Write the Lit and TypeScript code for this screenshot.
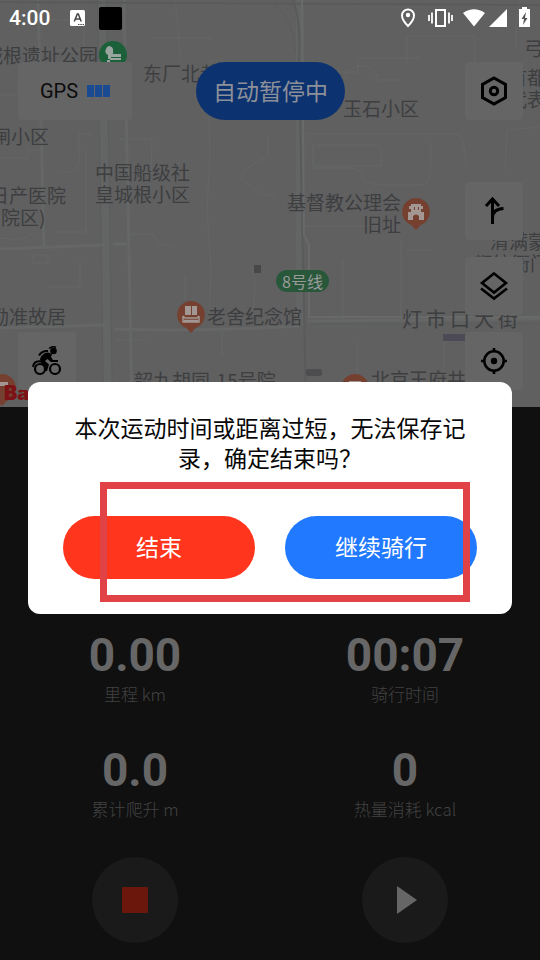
import { LitElement, html, css, svg } from "lit";
import { customElement } from "lit/decorators.js";

/** Base map: streets, place labels and points of interest. */
@customElement("ride-map")
class RideMap extends LitElement {
  static styles = css`
    :host {
      display: block;
      position: absolute;
      inset: 0;
      overflow: hidden;
      background: #606060;
      color: #3d3e40;
      font: 19px/22px "Noto Sans CJK SC", sans-serif;
    }
    .streets { position: absolute; left: 0; top: 0; width: 100%; height: 100%; }
    .place { position: absolute; margin: 0; white-space: nowrap; }
    .right { text-align: right; }
    .park { left: -16px; top: 44px; }
    .park-pin { left: 99px; top: 41px; }
    .north { left: 143px; top: 62px; }
    .jade { left: 343px; top: 97px; }
    .bow { left: 524px; top: 37px; }
    .capital { left: 508px; top: 66px; }
    .gate { left: -8px; top: 125px; }
    .hospital { left: -10px; top: 184px; }
    .hospital span { padding-left: 11px; }
    .society { left: 95px; top: 161px; }
    .church { left: 287px; top: 191px; }
    .church-pin { left: 402px; top: 198px; }
    .qing { left: 473px; top: 230px; }
    .qing span { padding-left: 17px; }
    .subway {
      left: 276px; top: 270px; padding: 0 6px; border-radius: 11px;
      background: #28573a; color: #999b9a; font-size: 16px;
    }
    .residence { left: -10px; top: 305px; }
    .laoshe { left: 207px; top: 305px; }
    .laoshe-pin { left: 177px; top: 301px; }
    .street { left: 402px; top: 308px; display: flex; gap: 4px; font-size: 20px; }
    .hutong { left: 134px; top: 369px; }
    .mall { left: 371px; top: 368px; }
    .mall-pin { left: 341px; top: 374px; }
    .edge-pin { left: -12px; top: 374px; }
    .brand {
      left: 4px; top: 382px; color: #7d1216;
      font: 900 20px/22px Inter, "Liberation Sans", sans-serif;
    }
    .pin { display: block; }
  `;

  private pin(glyph: unknown) {
    return html`<svg class="pin" width="28" height="33" viewBox="0 0 28 33">
      <path fill="#75402f" d="M14 0a14 14 0 0 1 4.5 27.200L14 32l-4.500-4.800A14 14 0 0 1 14 0z"/>
      ${glyph}
    </svg>`;
  }

  render() {
    return html`
      <svg class="streets" viewBox="0 0 540 407" preserveAspectRatio="xMidYMin slice" aria-hidden="true">
        <g fill="none" stroke="#656666">
          <path stroke="#5b5c5c" stroke-width="10" d="M102 0 108 407"/>
          <path stroke="#636464" stroke-width="8" d="M102 0 108 407M300 0V326"/>
          <path stroke-width="3" d="M38 0 44 247M124 0 132 407M0 249 105 245M113 244H127M0 328 105 325M114 329Q200 332 300 326M308 321 540 319"/>
          <path d="M46 20h38v30H46M0 95h18v-15h30M0 158h28v-8h10M57 172q25 5 22-20v-18h13M120 139h32l-1 35M128 234h24l8 10 15 3M208 90l2 60-3 60 4 60-2 50M218 61h-10M152 38h60M175 0l6 60M0 238q30 5 34-8M86 150v82H57M33 255h15v8H33zM268 156q-27 12-27 24l8 5 14 10h12M268 156v-20M80 262v25H48M252 268q8 25-4 55M222 322v35M185 275v25M145 340h-28"/>
          <path d="M304 72h54v-14h62M345 80q2-14 17-14 14 0 16 14h22M317 145h60q4 0 4 5v16H313v-22M313 168h38q10 0 13 12 5 5 20 5h38q8 0 9-20v-22M307 134h150q6 0 8 20l1 12M407 61v-25h68v32M520 0l-4 26v22M304 226h67M401 240v85M407 250h24M505 170l2-40 33-3M343 260v60M357 343v40M444 334v50"/>
          <path stroke="#595a5b" stroke-width="2" d="M0 2 540 5M293 0Q301 20 299 60L306 407"/>
          <path stroke="#686969" stroke-width="2" d="M302 0 304 235 309 245V317H540"/>
          <path stroke="#5b5c5c" d="M270 3q24 12 25 50M311 324H540"/>
        </g>
        <rect x="254" y="265" width="7" height="8" fill="#484849"/>
        <rect x="443" y="334" width="24" height="7" fill="#4b4a55"/>
        <rect x="306" y="369" width="16" height="7" rx="2" fill="#4d4d50"/>
      </svg>

      <p class="place park">城根遗址公园</p>
      <svg class="place park-pin" width="28" height="28" viewBox="0 0 28 28">
        <circle cx="14" cy="14" r="14" fill="#1b6038"/>
        <path fill="#9ba59f" d="M10 5a4 4 0 0 1 4 5 3 3 0 0 1-2 4v4H9v-4a4 4 0 0 1-2-6 4 4 0 0 1 3-3zM12 13h10v3H12zM11 17h11v2H11zM8 19h3v2H8z"/>
      </svg>
      <p class="place north">东厂北巷</p>
      <p class="place jade">玉石小区</p>
      <p class="place bow">弓</p>
      <p class="place capital">首都<br>代表</p>
      <p class="place gate">闸小区</p>
      <p class="place hospital">日产医院<br><span>院区)</span></p>
      <p class="place society">中国船级社<br>皇城根小区</p>
      <p class="place church right">基督教公理会<br>旧址</p>
      <div class="place church-pin">${this.pin(svg`<path fill="#a29792" d="M9 6h10v2h2v3h-2v3h3v8h-5v-4q-3-3-6 0v4H6v-8h3v-3H7V8h2zM12 9v3h1V9zM16 9v3h1V9z"/>`)}</div>
      <p class="place qing"><span>清满蒙汉</span><br>都统衙门</p>
      <p class="place subway">8号线</p>
      <p class="place residence">励准故居</p>
      <p class="place laoshe">老舍纪念馆</p>
      <div class="place laoshe-pin">${this.pin(svg`<path fill="#a29792" d="M8 5h6v9H8zM15 5h5v9h-5z"/><path fill="none" stroke="#a29792" stroke-width="1.500" d="M6 15l2 2h12l2-2M6 15v6h16v-6M7 19.500h14"/>`)}</div>
      <p class="place street"><span>灯</span><span>市</span><span>口</span><span>大</span><span>街</span></p>
      <p class="place hutong">韶九胡同-15号院</p>
      <p class="place mall">北京王府井</p>
      <div class="place mall-pin">${this.pin(svg`<path fill="#a29792" d="M8 7h12v10H8z"/>`)}</div>
      <div class="place edge-pin">${this.pin(svg`<path fill="#a29792" d="M7 8h13v4H7z"/>`)}</div>
      <p class="place brand">Baidu</p>
    `;
  }
}

@customElement("status-bar")
class StatusBar extends LitElement {
  static styles = css`
    :host {
      display: flex;
      align-items: center;
      height: 36px;
      padding: 0 8px 0 9px;
      color: #fff;
      font: 500 21px/24px Roboto, sans-serif;
    }
    .time { margin-right: 20px; }
    .notice { margin-right: 13px; }
    .app { width: 23px; height: 23px; border-radius: 2px; background: #000; }
    .system { margin-left: auto; }
    svg { display: block; }
  `;

  render() {
    return html`
      <span class="time">4:00</span>
      <svg class="notice" width="16" height="17" viewBox="0 0 16 17">
        <rect width="15" height="16" rx="1.500" fill="#fff"/>
        <path d="M4.300 11.500 7.300 4h1L11.200 11.500M5.500 9h4.500" fill="none" stroke="#444" stroke-width="1.500"/>
        <path d="M8 14.500h6" stroke="#444" stroke-dasharray="1.500 .8"/>
      </svg>
      <span class="app"></span>
      <svg class="system" width="132" height="24" viewBox="0 0 132 24">
        <path d="M8 3.500a6 6 0 0 1 6 6C14 14 8 20 8 20S2 14 2 9.500a6 6 0 0 1 6-6z" fill="none" stroke="#fff" stroke-width="2"/>
        <circle cx="8" cy="9" r="2.200" fill="#fff"/>
        <path d="M36 4h9v16h-9z" fill="none" stroke="#fff" stroke-width="2"/>
        <path d="M29 9v6M32 6.500v11M49 6.500v11M52 9v6" stroke="#fff" stroke-width="1.800"/>
        <path d="M63 7q11-7.500 22 0L74 20.500zM107 3v18H89zM122 1h5v2h3v18h-11V3h3z" fill="#fff"/>
        <path d="m126 6-4.500 7h2.500l-1 6 4.500-7H125z" fill="#555"/>
      </svg>
    `;
  }
}

@customElement("app-root")
class AppRoot extends LitElement {
  static styles = css`
    :host {
      display: flex;
      flex-direction: column;
      position: relative;
      min-height: 100vh;
      background: #101010;
      font-family: "Noto Sans CJK SC", sans-serif;
    }
    * { box-sizing: border-box; }
    button { border: 0; padding: 0; font: inherit; color: inherit; cursor: pointer; }
    svg { display: block; }

    .map { position: relative; padding-bottom: 17px; overflow: hidden; }
    .chrome { position: relative; }
    .tools {
      display: grid;
      grid-template-columns: 1fr auto 1fr;
      align-items: start;
      padding: 26px 17px 0 18px;
    }
    .card {
      display: flex;
      align-items: center;
      justify-content: center;
      width: 58px;
      height: 58px;
      border-radius: 4px;
      background: #656565;
      color: #000;
    }
    .gps {
      gap: 9px;
      width: 114px;
      color: #0c0c0c;
      font: 20px/24px Roboto, sans-serif;
    }
    .bars { display: flex; gap: 1px; }
    .bars i { width: 7px; height: 12px; background: #194a92; }
    .paused {
      height: 58px;
      padding: 0 17px;
      border-radius: 29px;
      background: #0d3270;
      color: #8c9099;
      font-size: 23px;
      line-height: 56px;
    }
    .settings { justify-self: end; }
    .side {
      display: flex;
      justify-content: space-between;
      align-items: flex-end;
      padding: 62px 17px 0 18px;
    }
    .stack { display: flex; flex-direction: column; gap: 17px; }

    .panel {
      flex: 1;
      display: flex;
      flex-direction: column;
      justify-content: flex-end;
      gap: 36px;
      padding-bottom: 17px;
    }
    .metrics { display: grid; grid-template-columns: 1fr 1fr; row-gap: 39px; margin: 0; }
    .metric { display: flex; flex-direction: column; gap: 2px; text-align: center; }
    .value { order: -1; margin: 0; color: #666; font: bold 46px/50px Roboto, sans-serif; }
    .name { color: #424242; font-size: 17px; font-weight: 300; line-height: 24px; }
    .actions { display: grid; grid-template-columns: 1fr 1fr; justify-items: center; }
    .round {
      display: grid;
      place-items: center;
      width: 86px;
      height: 86px;
      border-radius: 50%;
      background: #1a1a1a;
    }

    .overlay {
      position: absolute;
      inset: 0;
      display: flex;
      align-items: center;
      padding: 36px 28px 0;
    }
    .dialog {
      position: relative;
      flex: 1;
      padding: 30px 35px 35px;
      border-radius: 12px;
      background: #fff;
      font-size: 23px;
    }
    .message {
      margin: 0 0 44px;
      padding: 0 8px;
      color: #080808;
      line-height: 30px;
      text-align: center;
    }
    .choices { display: grid; grid-template-columns: 1fr 1fr; gap: 30px; }
    .choice { height: 63px; padding-bottom: 4px; border-radius: 32px; color: #fff; }
    .end { background: #ff351e; }
    .resume { background: #2179ff; }
    .highlight {
      position: absolute;
      inset: 100px 42px 12px 72px;
      border: 7px solid #e04245;
      pointer-events: none;
    }
  `;

  private metrics = [
    ["里程 km", "0.00"],
    ["骑行时间", "00:07"],
    ["累计爬升 m", "0.0"],
    ["热量消耗 kcal", "0"],
  ];

  render() {
    return html`
      <section class="map">
        <ride-map></ride-map>
        <div class="chrome">
          <status-bar></status-bar>
          <div class="tools">
            <div class="card gps">GPS<span class="bars"><i></i><i></i><i></i></span></div>
            <div class="paused">自动暂停中</div>
            <button class="card settings" aria-label="设置">
              <svg width="30" height="32" viewBox="0 0 30 32" fill="none" stroke="currentColor" stroke-width="3">
                <path d="M15 3 26.500 9.500v13L15 29 3.500 22.500v-13z"/><circle cx="15" cy="16" r="3.700"/>
              </svg>
            </button>
          </div>
          <div class="side">
            <button class="card" aria-label="骑行">
              <svg width="30" height="30" viewBox="0 0 30 30" fill="none" stroke="currentColor">
                <circle cx="8" cy="23" r="5" stroke-width="2.200"/>
                <circle cx="23" cy="23" r="5" stroke-width="2.200"/>
                <path d="M1 21Q2 14.500 9 15.500" stroke-width="2"/>
                <path d="M7 9.500Q10 4.500 16 5" stroke-width="2"/>
                <path d="M8 13Q10 7 16 6.500l4 1.500-1 3 2 3h5v2h-7l-3.500-3-2.500 2 4 3.500-2 6.500h-3l1-5-4-3z" fill="currentColor" stroke="none"/>
                <circle cx="21.500" cy="5" r="3.300" fill="currentColor" stroke="none"/>
                <path d="M17 2.500q3.500-3 7-1" stroke-width="1.500"/>
              </svg>
            </button>
            <div class="stack">
              <button class="card" aria-label="路线">
                <svg width="24" height="30" viewBox="0 0 24 30" fill="none" stroke="currentColor" stroke-width="3">
                  <path d="M10.500 28V3M4 10l6.500-7 6.500 7M10.500 22q0-9 11-9.500"/>
                </svg>
              </button>
              <button class="card" aria-label="图层">
                <svg width="30" height="30" viewBox="0 0 30 30" fill="none" stroke="currentColor" stroke-width="2.600">
                  <path d="M15 2.500 27 12 15 21.500 3 12zM2 17.500l13 10 13-10"/>
                </svg>
              </button>
              <button class="card" aria-label="定位">
                <svg width="28" height="28" viewBox="0 0 28 28" fill="none" stroke="currentColor" stroke-width="2.600">
                  <circle cx="14" cy="14" r="9.700"/>
                  <circle cx="14" cy="14" r="3.200" fill="currentColor" stroke="none"/>
                  <path d="M14 1v4M14 23v4M1 14h4M23 14h4"/>
                </svg>
              </button>
            </div>
          </div>
        </div>
      </section>

      <section class="panel">
        <dl class="metrics">
          ${this.metrics.map(
            ([name, value]) => html`<div class="metric">
              <dt class="name">${name}</dt>
              <dd class="value">${value}</dd>
            </div>`
          )}
        </dl>
        <div class="actions">
          <button class="round" aria-label="停止">
            <svg width="26" height="26"><rect width="26" height="26" rx="1" fill="#6b170c"/></svg>
          </button>
          <button class="round" aria-label="继续">
            <svg width="24" height="28" viewBox="0 0 24 28"><path d="M4 0v28l20-14z" fill="#666"/></svg>
          </button>
        </div>
      </section>

      <div class="overlay">
        <div class="dialog" role="alertdialog" aria-modal="true" aria-labelledby="message">
          <p class="message" id="message">本次运动时间或距离过短，无法保存记录，确定结束吗？</p>
          <div class="choices">
            <button class="choice end">结束</button>
            <button class="choice resume">继续骑行</button>
          </div>
          <div class="highlight"></div>
        </div>
      </div>
    `;
  }
}
